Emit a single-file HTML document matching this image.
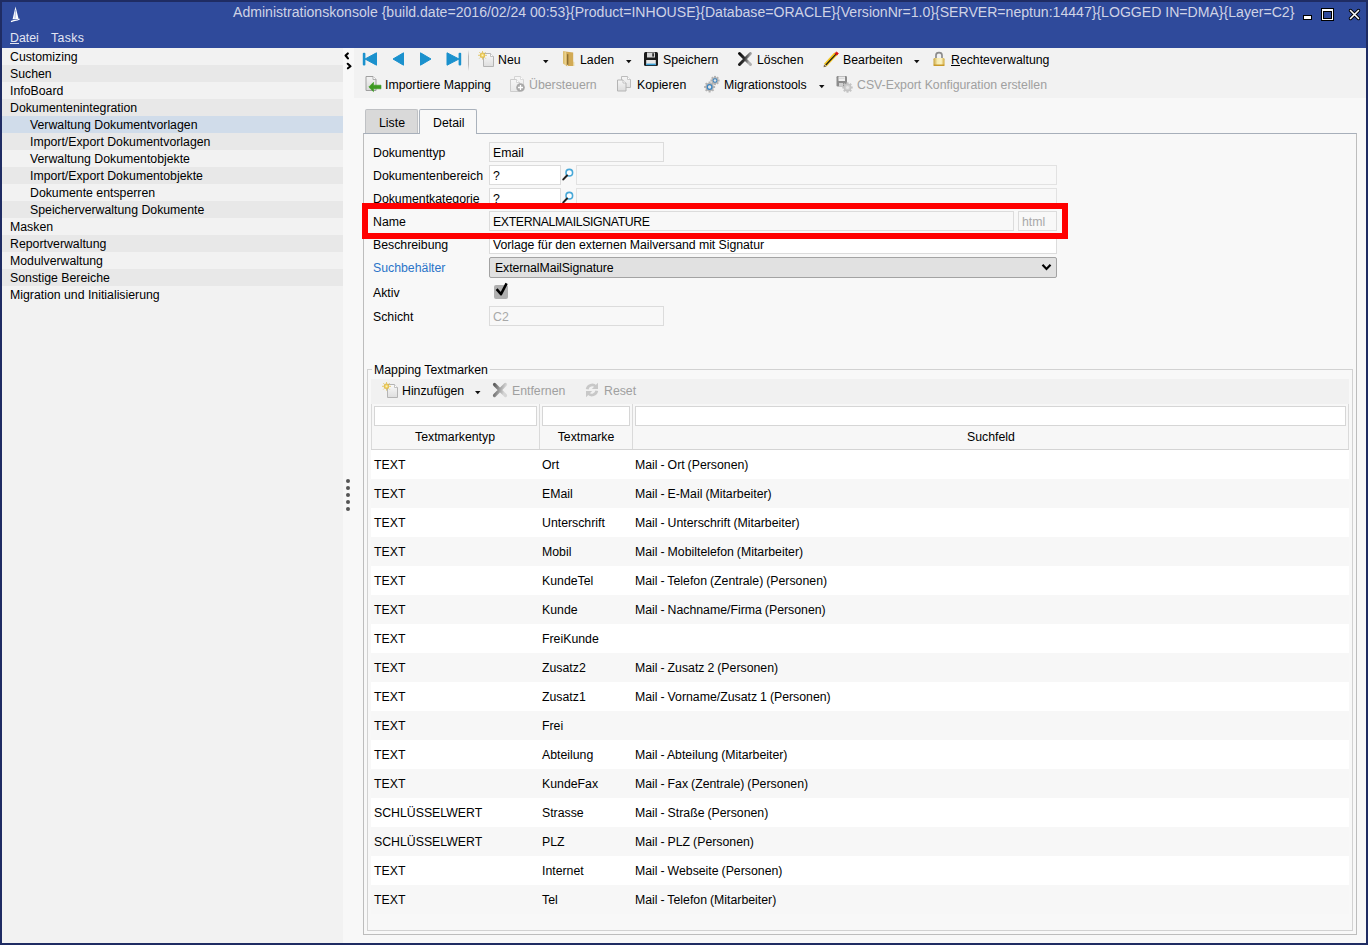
<!DOCTYPE html>
<html><head><meta charset="utf-8">
<style>
*{box-sizing:border-box;margin:0;padding:0}
html,body{width:1368px;height:945px;overflow:hidden}
body{position:relative;background:#1f2c63;font-family:"Liberation Sans",sans-serif;font-size:12.3px;color:#000}
.b{position:absolute}
.t{position:absolute;white-space:pre;line-height:15px}
</style></head><body>

<div class="b" style="left:2px;top:2px;width:1364px;height:46px;background:#2f4a9b"></div>
<div class="t" style="left:233px;top:5px;font-size:14.08px;color:#cfd3e6">Administrationskonsole {build.date=2016/02/24 00:53}{Product=INHOUSE}{Database=ORACLE}{VersionNr=1.0}{SERVER=neptun:14447}{LOGGED IN=DMA}{Layer=C2}</div>
<svg class="b" style="left:10px;top:6px" width="11" height="17" viewBox="0 0 11 17"><path d="M5.5 0.6 L8.6 13 L2.6 13.2 Z" fill="#fff"/><path d="M5.6 4 L5 12.6" stroke="#8fa0d0" stroke-width="0.7"/><path d="M1 15.6 Q3 14.6 5 14.4 Q7.5 14.2 9.6 13" stroke="#fff" stroke-width="1.2" fill="none"/></svg>
<div class="b" style="left:1303px;top:15px;width:9px;height:5px;background:#fff;border:1px solid #000"></div>
<div class="b" style="left:1321px;top:8px;width:13px;height:13px;background:#fff;border:1px solid #000"></div>
<div class="b" style="left:1323px;top:11px;width:9px;height:8px;background:#2f4a9b;border:1px solid #000"></div>
<svg class="b" style="left:1348px;top:8px" width="13" height="13" viewBox="0 0 13 13"><path d="M2.5 2.5 L10.5 10.5 M10.5 2.5 L2.5 10.5" stroke="#000" stroke-width="3.4" stroke-linecap="round"/><path d="M2.5 2.5 L10.5 10.5 M10.5 2.5 L2.5 10.5" stroke="#fff" stroke-width="1.6" stroke-linecap="round"/></svg>
<div class="t" style="left:10px;top:31px;color:#e3e6f2">Datei</div>
<div class="b" style="left:10px;top:43px;width:9px;height:1px;background:#e3e6f2"></div>
<div class="t" style="left:51px;top:31px;color:#e3e6f2;letter-spacing:0.35px">Tasks</div>
<div class="b" style="left:2px;top:48px;width:341px;height:895px;background:#f2f2f2"></div>
<div class="t" style="left:10px;top:50px">Customizing</div>
<div class="b" style="left:2px;top:65px;width:341px;height:17px;background:#e8e8e8"></div>
<div class="t" style="left:10px;top:67px">Suchen</div>
<div class="t" style="left:10px;top:84px">InfoBoard</div>
<div class="b" style="left:2px;top:99px;width:341px;height:17px;background:#e8e8e8"></div>
<div class="t" style="left:10px;top:101px">Dokumentenintegration</div>
<div class="b" style="left:2px;top:116px;width:341px;height:17px;background:#d0dcea"></div>
<div class="t" style="left:30px;top:118px">Verwaltung Dokumentvorlagen</div>
<div class="b" style="left:2px;top:133px;width:341px;height:17px;background:#e8e8e8"></div>
<div class="t" style="left:30px;top:135px">Import/Export Dokumentvorlagen</div>
<div class="t" style="left:30px;top:152px">Verwaltung Dokumentobjekte</div>
<div class="b" style="left:2px;top:167px;width:341px;height:17px;background:#e8e8e8"></div>
<div class="t" style="left:30px;top:169px">Import/Export Dokumentobjekte</div>
<div class="t" style="left:30px;top:186px">Dokumente entsperren</div>
<div class="b" style="left:2px;top:201px;width:341px;height:17px;background:#e8e8e8"></div>
<div class="t" style="left:30px;top:203px">Speicherverwaltung Dokumente</div>
<div class="t" style="left:10px;top:220px">Masken</div>
<div class="b" style="left:2px;top:235px;width:341px;height:17px;background:#e8e8e8"></div>
<div class="t" style="left:10px;top:237px">Reportverwaltung</div>
<div class="t" style="left:10px;top:254px">Modulverwaltung</div>
<div class="b" style="left:2px;top:269px;width:341px;height:17px;background:#e8e8e8"></div>
<div class="t" style="left:10px;top:271px">Sonstige Bereiche</div>
<div class="t" style="left:10px;top:288px">Migration und Initialisierung</div>
<div class="b" style="left:343px;top:48px;width:1023px;height:895px;background:#f8f8f8"></div>
<div class="b" style="left:354px;top:48px;width:1012px;height:50px;background:#f2f2f2"></div>
<svg class="b" style="left:344px;top:52px" width="8" height="18" viewBox="0 0 8 18"><path d="M3.8 1.4 L1.6 3.5 L3.9 6.4" stroke="#000" stroke-width="2.1" fill="none" stroke-linecap="round" stroke-linejoin="round"/><path d="M3.7 11.8 L6.5 14.2 L3.9 16.3" stroke="#000" stroke-width="2.1" fill="none" stroke-linecap="round" stroke-linejoin="round"/></svg>
<svg class="b" style="left:344px;top:478px" width="8" height="36" viewBox="0 0 8 36"><circle cx="4" cy="3" r="2" fill="#555"/><circle cx="4" cy="10" r="2" fill="#555"/><circle cx="4" cy="17" r="2" fill="#555"/><circle cx="4" cy="24" r="2" fill="#555"/><circle cx="4" cy="31" r="2" fill="#555"/></svg>
<svg class="b" style="left:362px;top:52px" width="16" height="14" viewBox="0 0 16 14"><rect x="0.8" y="0.8" width="2.6" height="12.6" rx="1" fill="#1b91cd"/><path d="M3 7 L14.5 0.8 L14.5 13.2 Z" fill="#1b91cd" stroke="#1b91cd" stroke-width="1" stroke-linejoin="round"/></svg>
<svg class="b" style="left:392px;top:52px" width="13" height="14" viewBox="0 0 13 14"><path d="M1 7 L11.5 0.8 L11.5 13.2 Z" fill="#1b91cd" stroke="#1b91cd" stroke-width="1" stroke-linejoin="round"/></svg>
<svg class="b" style="left:419px;top:52px" width="13" height="14" viewBox="0 0 13 14"><path d="M12 7 L1.5 0.8 L1.5 13.2 Z" fill="#1b91cd" stroke="#1b91cd" stroke-width="1" stroke-linejoin="round"/></svg>
<svg class="b" style="left:446px;top:52px" width="16" height="14" viewBox="0 0 16 14"><rect x="12.6" y="0.8" width="2.6" height="12.6" rx="1" fill="#1b91cd"/><path d="M13 7 L1 0.8 L1 13.2 Z" fill="#1b91cd" stroke="#1b91cd" stroke-width="1" stroke-linejoin="round"/></svg>
<div class="b" style="left:468px;top:50px;width:1px;height:21px;background:linear-gradient(#f2f2f2,#b8b8b8 30%,#b8b8b8 70%,#f2f2f2)"></div>
<svg class="b" style="left:478px;top:51px" width="17" height="17" viewBox="0 0 17 17"><defs><linearGradient id="g1" x1="0" y1="0" x2="0" y2="1"><stop offset="0" stop-color="#fafafa"/><stop offset="1" stop-color="#dedede"/></linearGradient></defs><path d="M5.5 2.5 H12.5 L15.5 5.5 V15.5 H5.5 Z" fill="url(#g1)" stroke="#b4b4b4" stroke-width="1"/><path d="M12.5 2.5 V5.5 H15.5" fill="#fff" stroke="#b4b4b4" stroke-width="0.8"/><defs><radialGradient id="sg1"><stop offset="0" stop-color="#fff6c8"/><stop offset="0.55" stop-color="#f0d060"/><stop offset="1" stop-color="#d8b448"/></radialGradient></defs><g stroke="#e2c45c" stroke-width="1" opacity="0.85"><path d="M4.5 0 V1.8 M4.5 6.8 V8.6 M0 4.3 H1.8 M7.2 4.3 H9 M1.3 1.1 L2.4 2.2 M6.6 6.4 L7.7 7.5 M7.7 1.1 L6.6 2.2 M1.3 7.5 L2.4 6.4"/></g><circle cx="4.5" cy="4.3" r="2.7" fill="url(#sg1)"/></svg>
<div class="t" style="left:498px;top:53px">Neu</div>
<svg class="b" style="left:543px;top:60px" width="6" height="4" viewBox="0 0 6 4"><path d="M0 0 H5.5 L2.75 3.2 Z" fill="#111"/></svg>
<svg class="b" style="left:562px;top:50px" width="14" height="17" viewBox="0 0 14 17"><defs><linearGradient id="fd" x1="0" y1="0" x2="1" y2="0"><stop offset="0" stop-color="#d8b868"/><stop offset="0.6" stop-color="#ead18c"/><stop offset="1" stop-color="#c9a050"/></linearGradient></defs><path d="M1.2 1.2 L11.2 2.4 V16 L6 16 Z" fill="#d2aa55"/><path d="M1 1.2 L5.2 2.4 V16.6 L1 13.4 Z" fill="url(#fd)"/><rect x="5.2" y="4.2" width="1.1" height="10.6" fill="#7a6028"/><path d="M11.2 11.6 L12.3 12 V16 L11.2 16 Z" fill="#e6d292"/></svg>
<div class="t" style="left:580px;top:53px">Laden</div>
<svg class="b" style="left:626px;top:60px" width="6" height="4" viewBox="0 0 6 4"><path d="M0 0 H5.5 L2.75 3.2 Z" fill="#111"/></svg>
<svg class="b" style="left:643px;top:51px" width="16" height="16" viewBox="0 0 16 16"><rect x="1" y="1" width="14" height="14" rx="1.5" fill="#1b1b1b"/><rect x="4" y="1.5" width="8" height="5" fill="#d6d6d6"/><rect x="9.3" y="2.2" width="1.6" height="3.4" fill="#222"/><rect x="3.2" y="9" width="9.6" height="5" fill="#e8e8e8"/><rect x="3.2" y="12.6" width="9.6" height="1.6" fill="#3aa0d8"/></svg>
<div class="t" style="left:663px;top:53px">Speichern</div>
<svg class="b" style="left:737px;top:51px" width="16" height="16" viewBox="0 0 16 16"><defs><linearGradient id="xg" x1="0" y1="0" x2="1" y2="0.3"><stop offset="0" stop-color="#0a0a0a"/><stop offset="0.55" stop-color="#333"/><stop offset="1" stop-color="#b0b0b0"/></linearGradient></defs><path d="M2.5 2.5 L13.5 13.5 M13.5 2.5 L2.5 13.5" stroke="url(#xg)" stroke-width="3" stroke-linecap="round"/></svg>
<div class="t" style="left:757px;top:53px">Löschen</div>
<svg class="b" style="left:823px;top:51px" width="16" height="17" viewBox="0 0 16 17"><path d="M2.4 14 L12.8 2.9" stroke="#f5c518" stroke-width="3.8"/><path d="M2.8 14 L13 3.2" stroke="#1a1a1a" stroke-width="1.2"/><path d="M12 2.4 L13.6 0.9 L15.3 2.6 L13.8 4.2 Z" fill="#d80c0c" stroke="#d80c0c" stroke-width="0.8"/><path d="M0.6 16.2 L1 13.4 L3.6 15.6 Z" fill="#7a6545"/></svg>
<div class="t" style="left:843px;top:53px">Bearbeiten</div>
<svg class="b" style="left:914px;top:60px" width="6" height="4" viewBox="0 0 6 4"><path d="M0 0 H5.5 L2.75 3.2 Z" fill="#111"/></svg>
<svg class="b" style="left:932px;top:50px" width="14" height="18" viewBox="0 0 14 18"><defs><linearGradient id="lk" x1="0" y1="0" x2="1" y2="0"><stop offset="0" stop-color="#c9a23a"/><stop offset="0.35" stop-color="#f5eab0"/><stop offset="0.7" stop-color="#faf2c2"/><stop offset="1" stop-color="#d0a838"/></linearGradient></defs><path d="M4 8.5 V5.2 Q4 2.6 7 2.6 Q10 2.6 10 5.2 V8.5" stroke="#8c8c8c" stroke-width="1.7" fill="none"/><rect x="1.5" y="8" width="11" height="8" rx="1.2" fill="url(#lk)"/><rect x="1.5" y="14.6" width="11" height="1.4" rx="0.7" fill="#c99a2a"/></svg>
<div class="t" style="left:951px;top:53px">Rechteverwaltung</div>
<div class="b" style="left:951px;top:65px;width:9px;height:1px;background:#000"></div>
<svg class="b" style="left:364px;top:75px" width="18" height="18" viewBox="0 0 18 18"><defs><linearGradient id="g2" x1="0" y1="0" x2="0" y2="1"><stop offset="0" stop-color="#f4f4f4"/><stop offset="1" stop-color="#d8d8d8"/></linearGradient></defs><path d="M2.0 1.5 H9.0 L12.0 4.5 V15.5 H2.0 Z" fill="url(#g2)" stroke="#a0a0a0" stroke-width="1"/><path d="M9.0 1.5 V4.5 H12.0" fill="#fff" stroke="#a0a0a0" stroke-width="0.8"/><path d="M4.8 12 L9.5 7.3 V10.2 H17 V13.8 H9.5 V16.7 Z" fill="#3d9a22" stroke="#3d9a22" stroke-width="0.6" stroke-linejoin="round"/></svg>
<div class="t" style="left:385px;top:78px">Importiere Mapping</div>
<svg class="b" style="left:509px;top:75px" width="18" height="18" viewBox="0 0 18 18"><defs><linearGradient id="g3" x1="0" y1="0" x2="0" y2="1"><stop offset="0" stop-color="#f6f6f6"/><stop offset="1" stop-color="#eeeeee"/></linearGradient></defs><path d="M5.5 1.5 H11.5 L14.5 4.5 V12.5 H5.5 Z" fill="url(#g3)" stroke="#d4d4d4" stroke-width="1"/><path d="M11.5 1.5 V4.5 H14.5" fill="#fff" stroke="#d4d4d4" stroke-width="0.8"/><defs><linearGradient id="g4" x1="0" y1="0" x2="0" y2="1"><stop offset="0" stop-color="#f6f6f6"/><stop offset="1" stop-color="#e8e8e8"/></linearGradient></defs><path d="M1.5 4.5 H7.5 L10.5 7.5 V16.5 H1.5 Z" fill="url(#g4)" stroke="#cdcdcd" stroke-width="1"/><path d="M7.5 4.5 V7.5 H10.5" fill="#fff" stroke="#cdcdcd" stroke-width="0.8"/><circle cx="11.5" cy="12.5" r="4.3" fill="#a9a9a9"/><path d="M11.5 10 V15 M9 12.5 H14" stroke="#fff" stroke-width="1.3"/></svg>
<div class="t" style="left:529px;top:78px;color:#a0a0a0">Übersteuern</div>
<svg class="b" style="left:616px;top:75px" width="16" height="18" viewBox="0 0 16 18"><defs><linearGradient id="g5" x1="0" y1="0" x2="0" y2="1"><stop offset="0" stop-color="#f6f6f6"/><stop offset="1" stop-color="#e2e2e2"/></linearGradient></defs><path d="M5.5 1.5 H11.5 L14.5 4.5 V12.5 H5.5 Z" fill="url(#g5)" stroke="#bcbcbc" stroke-width="1"/><path d="M11.5 1.5 V4.5 H14.5" fill="#fff" stroke="#bcbcbc" stroke-width="0.8"/><defs><linearGradient id="g6" x1="0" y1="0" x2="0" y2="1"><stop offset="0" stop-color="#f6f6f6"/><stop offset="1" stop-color="#dcdcdc"/></linearGradient></defs><path d="M1.5 5.0 H7.0 L10.0 8.0 V16.0 H1.5 Z" fill="url(#g6)" stroke="#b4b4b4" stroke-width="1"/><path d="M7.0 5.0 V8.0 H10.0" fill="#fff" stroke="#b4b4b4" stroke-width="0.8"/></svg>
<div class="t" style="left:637px;top:78px">Kopieren</div>
<svg class="b" style="left:702px;top:75px" width="20" height="18" viewBox="0 0 20 18"><circle cx="13" cy="5.5" r="3.3" fill="#b2b2b2"/><rect x="12" y="0.9000000000000001" width="2" height="2.6" fill="#b2b2b2" transform="rotate(0 13 5.5)"/><rect x="12" y="0.9000000000000001" width="2" height="2.6" fill="#b2b2b2" transform="rotate(45 13 5.5)"/><rect x="12" y="0.9000000000000001" width="2" height="2.6" fill="#b2b2b2" transform="rotate(90 13 5.5)"/><rect x="12" y="0.9000000000000001" width="2" height="2.6" fill="#b2b2b2" transform="rotate(135 13 5.5)"/><rect x="12" y="0.9000000000000001" width="2" height="2.6" fill="#b2b2b2" transform="rotate(180 13 5.5)"/><rect x="12" y="0.9000000000000001" width="2" height="2.6" fill="#b2b2b2" transform="rotate(225 13 5.5)"/><rect x="12" y="0.9000000000000001" width="2" height="2.6" fill="#b2b2b2" transform="rotate(270 13 5.5)"/><rect x="12" y="0.9000000000000001" width="2" height="2.6" fill="#b2b2b2" transform="rotate(315 13 5.5)"/><circle cx="13" cy="5.5" r="2.3099999999999996" fill="#3a85c2"/><circle cx="13" cy="5.5" r="1.32" fill="#e6e6e6"/><circle cx="7.6" cy="12" r="4.2" fill="#b2b2b2"/><rect x="6.6" y="6.5" width="2" height="2.6" fill="#b2b2b2" transform="rotate(0 7.6 12)"/><rect x="6.6" y="6.5" width="2" height="2.6" fill="#b2b2b2" transform="rotate(45 7.6 12)"/><rect x="6.6" y="6.5" width="2" height="2.6" fill="#b2b2b2" transform="rotate(90 7.6 12)"/><rect x="6.6" y="6.5" width="2" height="2.6" fill="#b2b2b2" transform="rotate(135 7.6 12)"/><rect x="6.6" y="6.5" width="2" height="2.6" fill="#b2b2b2" transform="rotate(180 7.6 12)"/><rect x="6.6" y="6.5" width="2" height="2.6" fill="#b2b2b2" transform="rotate(225 7.6 12)"/><rect x="6.6" y="6.5" width="2" height="2.6" fill="#b2b2b2" transform="rotate(270 7.6 12)"/><rect x="6.6" y="6.5" width="2" height="2.6" fill="#b2b2b2" transform="rotate(315 7.6 12)"/><circle cx="7.6" cy="12" r="2.94" fill="#3a85c2"/><circle cx="7.6" cy="12" r="1.6800000000000002" fill="#e6e6e6"/></svg>
<div class="t" style="left:724px;top:78px">Migrationstools</div>
<svg class="b" style="left:819px;top:85px" width="6" height="4" viewBox="0 0 6 4"><path d="M0 0 H5.5 L2.75 3.2 Z" fill="#111"/></svg>
<svg class="b" style="left:835px;top:75px" width="18" height="18" viewBox="0 0 18 18"><rect x="1.5" y="1" width="10.5" height="10.5" rx="1.2" fill="#8c8c8c"/><rect x="3.5" y="1.5" width="6.5" height="4.5" fill="#f0f0f0"/><rect x="4" y="2.8" width="5.5" height="0.8" fill="#ccc"/><rect x="4" y="8" width="4" height="3.5" fill="#d0d0d0"/><circle cx="12.5" cy="12.5" r="3.9" fill="#c4c4c4"/><rect x="11.5" y="7.3" width="2" height="2.6" fill="#c4c4c4" transform="rotate(0 12.5 12.5)"/><rect x="11.5" y="7.3" width="2" height="2.6" fill="#c4c4c4" transform="rotate(45 12.5 12.5)"/><rect x="11.5" y="7.3" width="2" height="2.6" fill="#c4c4c4" transform="rotate(90 12.5 12.5)"/><rect x="11.5" y="7.3" width="2" height="2.6" fill="#c4c4c4" transform="rotate(135 12.5 12.5)"/><rect x="11.5" y="7.3" width="2" height="2.6" fill="#c4c4c4" transform="rotate(180 12.5 12.5)"/><rect x="11.5" y="7.3" width="2" height="2.6" fill="#c4c4c4" transform="rotate(225 12.5 12.5)"/><rect x="11.5" y="7.3" width="2" height="2.6" fill="#c4c4c4" transform="rotate(270 12.5 12.5)"/><rect x="11.5" y="7.3" width="2" height="2.6" fill="#c4c4c4" transform="rotate(315 12.5 12.5)"/><circle cx="12.5" cy="12.5" r="2.73" fill="#cfcfcf"/><circle cx="12.5" cy="12.5" r="1.56" fill="#e6e6e6"/></svg>
<div class="t" style="left:857px;top:78px;color:#a0a0a0">CSV-Export Konfiguration erstellen</div>
<div class="b" style="left:363px;top:133px;width:994px;height:802px;background:#f8f8f8;border:1px solid #bdbdbd;border-top-color:#a7afba"></div>
<div class="b" style="left:365px;top:109px;width:53px;height:24px;background:#d9d9d9;border:1px solid #bfc1c4;border-bottom:none;border-radius:2px 2px 0 0"></div>
<div class="b" style="left:419px;top:109px;width:58px;height:25px;background:#f8f8f8;border:1px solid #aab2bc;border-bottom:none;border-radius:2px 2px 0 0"></div>
<div class="t" style="left:379px;top:116px">Liste</div>
<div class="t" style="left:433px;top:116px">Detail</div>
<div class="b" style="left:489px;top:142px;width:175px;height:20px;background:#f8f8f8;border:1px solid #dcdcdc"></div>
<div class="b" style="left:489px;top:165px;width:72px;height:20px;background:#fff;border:1px solid #dcdcdc"></div>
<div class="b" style="left:576px;top:165px;width:481px;height:20px;background:#f8f8f8;border:1px solid #e2e2e2"></div>
<div class="b" style="left:489px;top:188px;width:72px;height:20px;background:#fff;border:1px solid #dcdcdc"></div>
<div class="b" style="left:576px;top:188px;width:481px;height:20px;background:#f8f8f8;border:1px solid #e2e2e2"></div>
<div class="b" style="left:489px;top:211px;width:525px;height:20px;background:#f8f8f8;border:1px solid #dcdcdc"></div>
<div class="b" style="left:1018px;top:211px;width:39px;height:20px;background:#f8f8f8;border:1px solid #dcdcdc"></div>
<div class="b" style="left:489px;top:234px;width:568px;height:20px;background:#fff;border:1px solid #dcdcdc"></div>
<div class="b" style="left:489px;top:257px;width:568px;height:21px;background:#e1e1e1;border:1px solid #a3a3a3;border-radius:2px"></div>
<svg class="b" style="left:1041px;top:263px" width="12" height="9" viewBox="0 0 12 9"><path d="M1.5 1.8 L5.5 6 L9.5 1.8" stroke="#000" stroke-width="2.2" fill="none"/></svg>
<div class="b" style="left:489px;top:306px;width:175px;height:20px;background:#f8f8f8;border:1px solid #dcdcdc"></div>
<div class="t" style="left:373px;top:146px">Dokumenttyp</div>
<div class="t" style="left:373px;top:169px">Dokumentenbereich</div>
<div class="t" style="left:373px;top:192px">Dokumentkategorie</div>
<div class="t" style="left:373px;top:215px">Name</div>
<div class="t" style="left:373px;top:238px">Beschreibung</div>
<div class="t" style="left:373px;top:261px;color:#2b74c8">Suchbehälter</div>
<div class="t" style="left:373px;top:286px">Aktiv</div>
<div class="t" style="left:373px;top:310px">Schicht</div>
<div class="t" style="left:493px;top:146px">Email</div>
<div class="t" style="left:493px;top:169px">?</div>
<div class="t" style="left:493px;top:192px">?</div>
<div class="t" style="left:493px;top:215px;letter-spacing:-0.37px">EXTERNALMAILSIGNATURE</div>
<div class="t" style="left:1022px;top:215px;color:#a8a8a8">html</div>
<div class="t" style="left:493px;top:238px;letter-spacing:-0.05px">Vorlage für den externen Mailversand mit Signatur</div>
<div class="t" style="left:495px;top:261px;letter-spacing:-0.08px">ExternalMailSignature</div>
<div class="t" style="left:493px;top:310px;color:#a8a8a8">C2</div>
<svg class="b" style="left:562px;top:167px" width="13" height="14" viewBox="0 0 13 14"><circle cx="7.3" cy="5.7" r="3.3" stroke="#48a8d8" stroke-width="1.6" fill="#fff"/><path d="M1.3 12.4 L5 8.5" stroke="#222" stroke-width="2" stroke-linecap="round"/></svg>
<svg class="b" style="left:562px;top:190px" width="13" height="14" viewBox="0 0 13 14"><circle cx="7.3" cy="5.7" r="3.3" stroke="#48a8d8" stroke-width="1.6" fill="#fff"/><path d="M1.3 12.4 L5 8.5" stroke="#222" stroke-width="2" stroke-linecap="round"/></svg>
<div class="b" style="left:494px;top:285px;width:14px;height:14px;background:#b0b0b0;border-radius:2px"></div>
<svg class="b" style="left:494px;top:282px" width="16" height="17" viewBox="0 0 16 17"><path d="M2.6 7.2 L7 12.2 L12.6 1.4" stroke="#000" stroke-width="2.5" fill="none" stroke-linejoin="round"/></svg>
<div class="b" style="left:362px;top:203px;width:706px;height:36px;border:6px solid #ff0000"></div>
<div class="b" style="left:367px;top:369px;width:986px;height:562px;border:1px solid #d2d2d2"></div>
<div class="b" style="left:372px;top:366px;width:118px;height:7px;background:#f8f8f8"></div>
<div class="t" style="left:374px;top:363px">Mapping Textmarken</div>
<div class="b" style="left:371px;top:379px;width:978px;height:25px;background:#f1f1f1"></div>
<svg class="b" style="left:382px;top:382px" width="17" height="17" viewBox="0 0 17 17"><defs><linearGradient id="g7" x1="0" y1="0" x2="0" y2="1"><stop offset="0" stop-color="#fafafa"/><stop offset="1" stop-color="#dedede"/></linearGradient></defs><path d="M5.5 2.5 H12.5 L15.5 5.5 V15.5 H5.5 Z" fill="url(#g7)" stroke="#b4b4b4" stroke-width="1"/><path d="M12.5 2.5 V5.5 H15.5" fill="#fff" stroke="#b4b4b4" stroke-width="0.8"/><defs><radialGradient id="sg7"><stop offset="0" stop-color="#fff6c8"/><stop offset="0.55" stop-color="#f0d060"/><stop offset="1" stop-color="#d8b448"/></radialGradient></defs><g stroke="#e2c45c" stroke-width="1" opacity="0.85"><path d="M4.5 0 V1.8 M4.5 6.8 V8.6 M0 4.3 H1.8 M7.2 4.3 H9 M1.3 1.1 L2.4 2.2 M6.6 6.4 L7.7 7.5 M7.7 1.1 L6.6 2.2 M1.3 7.5 L2.4 6.4"/></g><circle cx="4.5" cy="4.3" r="2.7" fill="url(#sg7)"/></svg>
<div class="t" style="left:402px;top:384px">Hinzufügen</div>
<svg class="b" style="left:475px;top:391px" width="6" height="4" viewBox="0 0 6 4"><path d="M0 0 H5.5 L2.75 3.2 Z" fill="#111"/></svg>
<svg class="b" style="left:492px;top:382px" width="16" height="16" viewBox="0 0 16 16"><defs><linearGradient id="xg2" x1="0" y1="0" x2="1" y2="0.3"><stop offset="0" stop-color="#5e5e5e"/><stop offset="0.5" stop-color="#9a9a9a"/><stop offset="1" stop-color="#d6d6d6"/></linearGradient></defs><path d="M2.5 2.5 L13.5 13.5 M13.5 2.5 L2.5 13.5" stroke="url(#xg2)" stroke-width="3.2" stroke-linecap="round"/></svg>
<div class="t" style="left:512px;top:384px;color:#a0a0a0">Entfernen</div>
<svg class="b" style="left:585px;top:382px" width="14" height="16" viewBox="0 0 14 16"><path d="M2.2 7.2 A5 5 0 0 1 10.8 4.6" stroke="#c8c8c8" stroke-width="2.8" fill="none"/><path d="M13 0.8 V7 H6.8 Z" fill="#c8c8c8"/><path d="M11.8 8.8 A5 5 0 0 1 3.2 11.4" stroke="#c8c8c8" stroke-width="2.8" fill="none"/><path d="M1 15.2 V9 H7.2 Z" fill="#c8c8c8"/></svg>
<div class="t" style="left:604px;top:384px;color:#a0a0a0">Reset</div>
<div class="b" style="left:371px;top:404px;width:978px;height:46px;background:#f7f7f7;border:1px solid #dadada;border-top:none"></div>
<div class="b" style="left:371px;top:449px;width:978px;height:1px;background:#d4d4d4"></div>
<div class="b" style="left:539px;top:404px;width:1px;height:45px;background:#dadada"></div>
<div class="b" style="left:632px;top:404px;width:1px;height:45px;background:#dadada"></div>
<div class="b" style="left:374px;top:406px;width:163px;height:20px;background:#fff;border:1px solid #d6d6d6"></div>
<div class="b" style="left:542px;top:406px;width:88px;height:20px;background:#fff;border:1px solid #d6d6d6"></div>
<div class="b" style="left:635px;top:406px;width:711px;height:20px;background:#fff;border:1px solid #d6d6d6"></div>
<div class="t" style="left:371px;top:430px;width:168px;text-align:center">Textmarkentyp</div>
<div class="t" style="left:540px;top:430px;width:92px;text-align:center">Textmarke</div>
<div class="t" style="left:633px;top:430px;width:716px;text-align:center">Suchfeld</div>
<div class="b" style="left:371px;top:450px;width:978px;height:29px;background:#ffffff"></div>
<div class="t" style="left:374px;top:458px">TEXT</div>
<div class="t" style="left:542px;top:458px">Ort</div>
<div class="t" style="left:635px;top:458px;word-spacing:-0.45px">Mail - Ort (Personen)</div>
<div class="b" style="left:371px;top:479px;width:978px;height:29px;background:#f7f7f7"></div>
<div class="t" style="left:374px;top:487px">TEXT</div>
<div class="t" style="left:542px;top:487px">EMail</div>
<div class="t" style="left:635px;top:487px;word-spacing:-0.45px">Mail - E-Mail (Mitarbeiter)</div>
<div class="b" style="left:371px;top:508px;width:978px;height:29px;background:#ffffff"></div>
<div class="t" style="left:374px;top:516px">TEXT</div>
<div class="t" style="left:542px;top:516px">Unterschrift</div>
<div class="t" style="left:635px;top:516px;word-spacing:-0.45px">Mail - Unterschrift (Mitarbeiter)</div>
<div class="b" style="left:371px;top:537px;width:978px;height:29px;background:#f7f7f7"></div>
<div class="t" style="left:374px;top:545px">TEXT</div>
<div class="t" style="left:542px;top:545px">Mobil</div>
<div class="t" style="left:635px;top:545px;word-spacing:-0.45px">Mail - Mobiltelefon (Mitarbeiter)</div>
<div class="b" style="left:371px;top:566px;width:978px;height:29px;background:#ffffff"></div>
<div class="t" style="left:374px;top:574px">TEXT</div>
<div class="t" style="left:542px;top:574px">KundeTel</div>
<div class="t" style="left:635px;top:574px;word-spacing:-0.45px">Mail - Telefon (Zentrale) (Personen)</div>
<div class="b" style="left:371px;top:595px;width:978px;height:29px;background:#f7f7f7"></div>
<div class="t" style="left:374px;top:603px">TEXT</div>
<div class="t" style="left:542px;top:603px">Kunde</div>
<div class="t" style="left:635px;top:603px;word-spacing:-0.45px">Mail - Nachname/Firma (Personen)</div>
<div class="b" style="left:371px;top:624px;width:978px;height:29px;background:#ffffff"></div>
<div class="t" style="left:374px;top:632px">TEXT</div>
<div class="t" style="left:542px;top:632px">FreiKunde</div>
<div class="b" style="left:371px;top:653px;width:978px;height:29px;background:#f7f7f7"></div>
<div class="t" style="left:374px;top:661px">TEXT</div>
<div class="t" style="left:542px;top:661px">Zusatz2</div>
<div class="t" style="left:635px;top:661px;word-spacing:-0.45px">Mail - Zusatz 2 (Personen)</div>
<div class="b" style="left:371px;top:682px;width:978px;height:29px;background:#ffffff"></div>
<div class="t" style="left:374px;top:690px">TEXT</div>
<div class="t" style="left:542px;top:690px">Zusatz1</div>
<div class="t" style="left:635px;top:690px;word-spacing:-0.45px">Mail - Vorname/Zusatz 1 (Personen)</div>
<div class="b" style="left:371px;top:711px;width:978px;height:29px;background:#f7f7f7"></div>
<div class="t" style="left:374px;top:719px">TEXT</div>
<div class="t" style="left:542px;top:719px">Frei</div>
<div class="b" style="left:371px;top:740px;width:978px;height:29px;background:#ffffff"></div>
<div class="t" style="left:374px;top:748px">TEXT</div>
<div class="t" style="left:542px;top:748px">Abteilung</div>
<div class="t" style="left:635px;top:748px;word-spacing:-0.45px">Mail - Abteilung (Mitarbeiter)</div>
<div class="b" style="left:371px;top:769px;width:978px;height:29px;background:#f7f7f7"></div>
<div class="t" style="left:374px;top:777px">TEXT</div>
<div class="t" style="left:542px;top:777px">KundeFax</div>
<div class="t" style="left:635px;top:777px;word-spacing:-0.45px">Mail - Fax (Zentrale) (Personen)</div>
<div class="b" style="left:371px;top:798px;width:978px;height:29px;background:#ffffff"></div>
<div class="t" style="left:374px;top:806px">SCHLÜSSELWERT</div>
<div class="t" style="left:542px;top:806px">Strasse</div>
<div class="t" style="left:635px;top:806px;word-spacing:-0.45px">Mail - Straße (Personen)</div>
<div class="b" style="left:371px;top:827px;width:978px;height:29px;background:#f7f7f7"></div>
<div class="t" style="left:374px;top:835px">SCHLÜSSELWERT</div>
<div class="t" style="left:542px;top:835px">PLZ</div>
<div class="t" style="left:635px;top:835px;word-spacing:-0.45px">Mail - PLZ (Personen)</div>
<div class="b" style="left:371px;top:856px;width:978px;height:29px;background:#ffffff"></div>
<div class="t" style="left:374px;top:864px">TEXT</div>
<div class="t" style="left:542px;top:864px">Internet</div>
<div class="t" style="left:635px;top:864px;word-spacing:-0.45px">Mail - Webseite (Personen)</div>
<div class="b" style="left:371px;top:885px;width:978px;height:29px;background:#f7f7f7"></div>
<div class="t" style="left:374px;top:893px">TEXT</div>
<div class="t" style="left:542px;top:893px">Tel</div>
<div class="t" style="left:635px;top:893px;word-spacing:-0.45px">Mail - Telefon (Mitarbeiter)</div>
</body></html>
